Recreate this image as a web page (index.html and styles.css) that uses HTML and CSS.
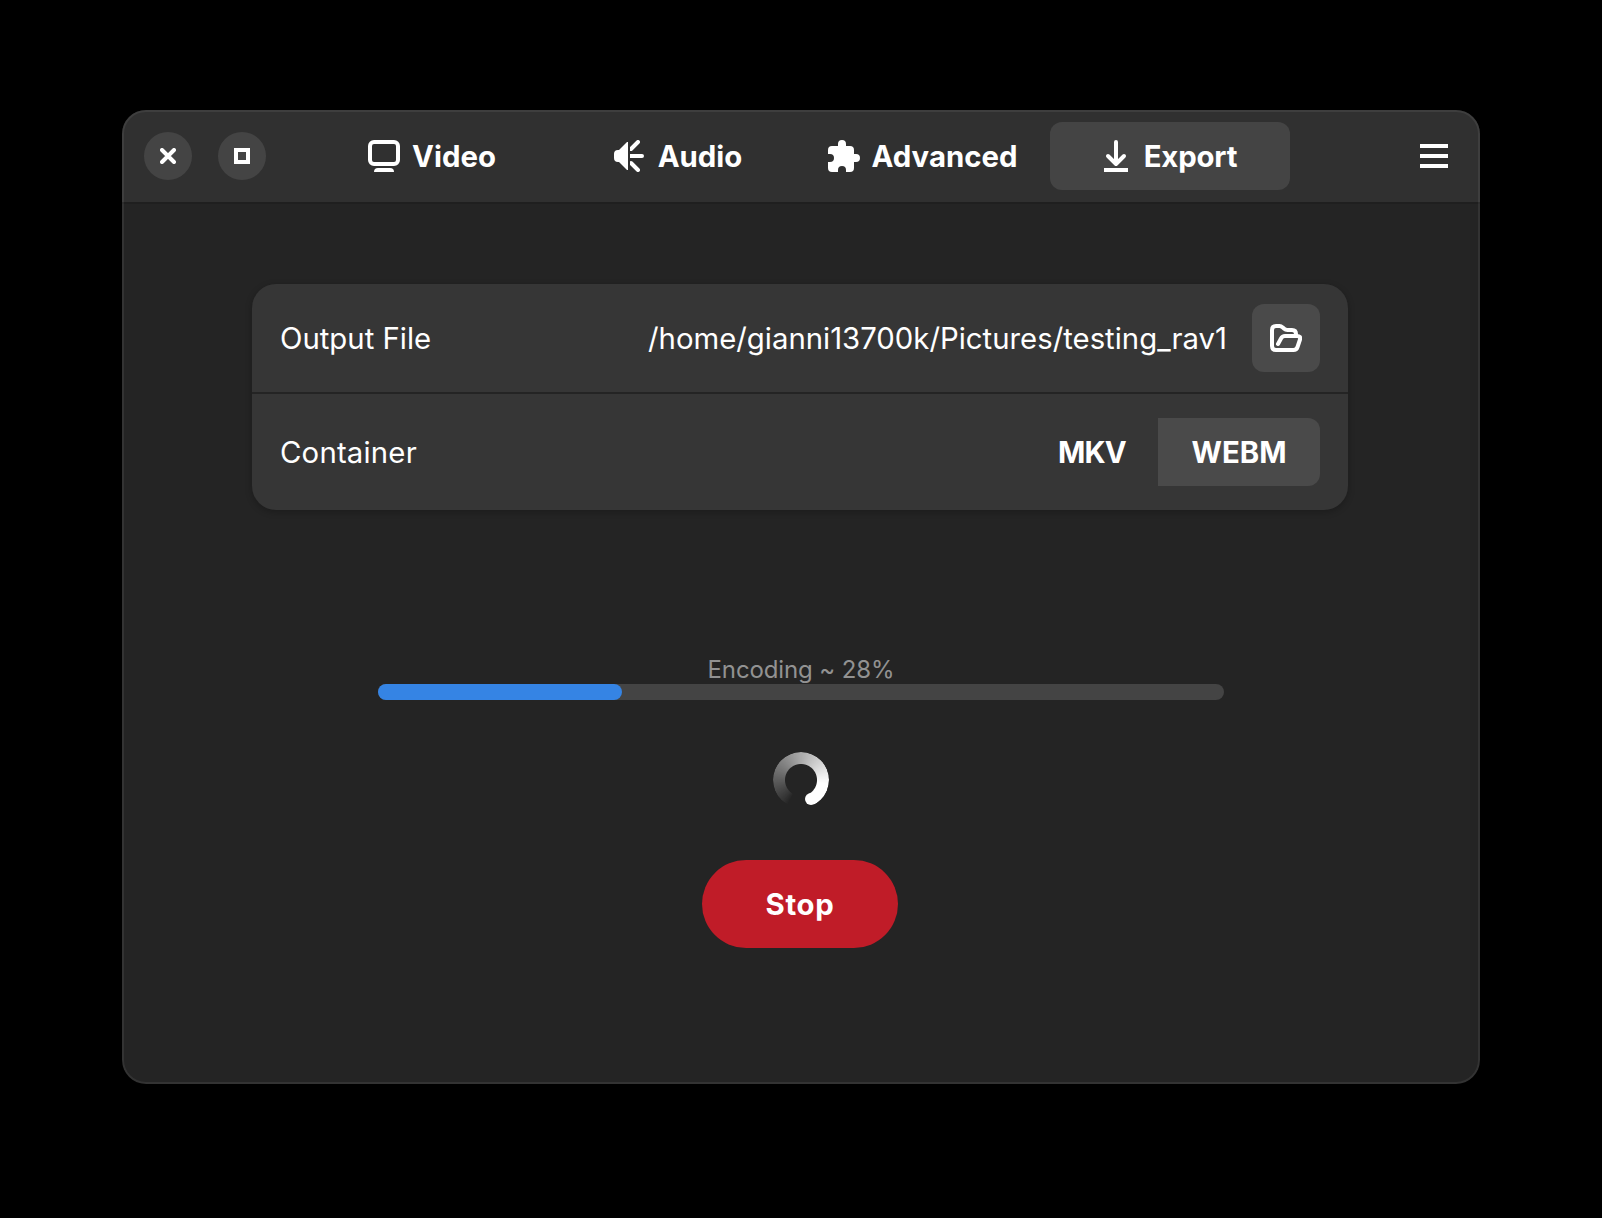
FILE: index.html
```html
<!DOCTYPE html>
<html lang="en">
<head>
<meta charset="utf-8">
<title>Export</title>
<link rel="stylesheet" href="styles.css">
</head>
<body>
<main class="window">
  <header class="header">
    <div class="controls">
      <button class="round" aria-label="Close"><svg width="16" height="16" viewBox="0 0 16 16"><path d="M2 2l12 12M14 2L2 14" stroke="#fff" stroke-width="4" stroke-linecap="round"/></svg></button>
      <button class="round" aria-label="Maximize"><svg width="16" height="16" viewBox="0 0 16 16"><path d="M2 2h12v12H2z" fill="none" stroke="#fff" stroke-width="4"/></svg></button>
    </div>
    <nav class="tabs">
      <button class="tab"><svg width="32" height="32" viewBox="0 0 32 32"><rect x="2" y="2" width="28" height="22" rx="4" fill="none" stroke="#fff" stroke-width="4"/><path d="M6 32q0-4 4-4h12q4 0 4 4z" fill="#fff"/></svg><span>Video</span></button>
      <button class="tab audio"><svg width="32" height="32" viewBox="0 0 32 32"><path d="M16 2v28h-1L7 22H6q-4 0-4-4v-4q0-4 4-4h1l8-8z" fill="#fff"/><path d="M19 9l7-7M18 16h12M19 23l7 7" fill="none" stroke="#fff" stroke-width="4" stroke-linecap="round"/><path d="M16 0h2v32h-2z" fill="#303030"/></svg><span>Audio</span></button>
      <button class="tab advanced"><svg width="32" height="32" viewBox="0 0 32 32"><path d="M10 6V4a4 4 0 0 1 8 0v2h4q4 0 4 4v4h2a4 4 0 0 1 0 8h-2v6q0 4-4 4h-4v-2a4 4 0 0 0-8 0v2H4q-4 0-4-4v-6h2a4 4 0 0 0 0-8H0v-4q0-4 4-4z" fill="#fff"/></svg><span>Advanced</span></button>
      <button class="tab active"><svg width="32" height="32" viewBox="0 0 32 32"><path d="M16 2v20M8 16l8 8 8-8" fill="none" stroke="#fff" stroke-width="4" stroke-linecap="round" stroke-linejoin="round"/><path d="M4 28h24v4H4z" fill="#fff"/></svg><span>Export</span></button>
    </nav>
    <button class="menu" aria-label="Menu"><svg width="28" height="24" viewBox="0 0 28 24"><path d="M0 2h28M0 12h28M0 22h28" stroke="#fff" stroke-width="4"/></svg></button>
  </header>
  <section class="content">
    <div class="card">
      <div class="row file">
        <span class="label">Output File</span>
        <span class="path">/home/gianni13700k/Pictures/testing_rav1</span>
        <button class="open" aria-label="Choose file"><svg width="32" height="32" viewBox="0 0 32 32"><path d="M8 22l3-5.500Q12.300 14 15 14H27q4 0 3 3.500L27.500 25Q26.500 28 23.500 28H6q-4 0-4-4V8q0-4 4-4h3.500q1.700 0 3 1.300l1.700 1.500Q15.500 8 17.500 8H22q4 0 4 4v1" fill="none" stroke="#fff" stroke-width="4" stroke-linecap="round" stroke-linejoin="round"/></svg></button>
      </div>
      <div class="row container">
        <span class="label">Container</span>
        <div class="choice"><button class="option mkv"><span>MKV</span></button><button class="option selected"><span>WEBM</span></button></div>
      </div>
    </div>
    <div class="progress">
      <span class="status">Encoding ~ 28%</span>
      <div class="track"><div class="fill"></div></div>
    </div>
    <div class="spinner"><div class="ring"></div></div>
    <button class="stop"><span>Stop</span></button>
  </section>
</main>
</body>
</html>
```
FILE: styles.css
```css
* { box-sizing: border-box; }
body {
  margin: 0;
  height: 1218px;
  padding: 110px 122px;
  background: #000;
  color: #fff;
  font: 400 29.33px/36px Inter, "Noto Sans", sans-serif;
  overflow: hidden;
}
button {
  border: 0;
  padding: 0;
  background: none;
  color: inherit;
  font: inherit;
  font-weight: 700;
  display: flex;
  align-items: center;
  justify-content: center;
}
button span { padding-top: 2px; }
svg { display: block; flex: none; }
.window {
  position: relative;
  width: 1358px;
  height: 974px;
  border-radius: 24px;
  background: #242424;
  overflow: hidden;
}
.window::after {
  content: "";
  position: absolute;
  inset: 0;
  border: 2px solid rgba(255, 255, 255, .07);
  border-radius: 24px;
  pointer-events: none;
}
.header {
  height: 94px;
  display: flex;
  background: #303030;
  border-bottom: 2px solid #1f1f1f;
}
.controls {
  width: 190px;
  padding: 22px 0 0 22px;
  display: flex;
  gap: 26px;
}
.round { width: 48px; height: 48px; border-radius: 50%; background: #444; }
.tabs { display: flex; gap: 6px; padding-top: 12px; }
.tab { width: 240px; height: 68px; gap: 12px; border-radius: 12px; }
.audio { gap: 14px; padding-right: 2px; }
.advanced { padding-right: 3px; }
.tab.active { background: #444; padding-right: 3px; letter-spacing: -.15px; }
.menu { width: 28px; height: 24px; margin: 34px 0 0 130px; }
.content {
  display: flex;
  flex-direction: column;
  align-items: center;
  padding-top: 80px;
}
.card {
  width: 1096px;
  border-radius: 24px;
  background: #363636;
  box-shadow: 0 2px 6px 1px rgba(0, 0, 0, .2);
  margin-right: 2px;
}
.row { display: flex; align-items: center; padding: 0 28px; }
.file { height: 110px; border-bottom: 2px solid #242424; }
.container { height: 116px; }
.label { flex: 1; padding-top: 2px; }
.container .label { letter-spacing: .2px; }
.path { margin-right: 25px; padding-top: 2px; }
.open { width: 68px; height: 68px; border-radius: 12px; background: #4a4a4a; }
.choice { display: flex; }
.option { width: 132px; height: 68px; }
.mkv { letter-spacing: -.8px; }
.option.selected { width: 162px; background: #4a4a4a; border-radius: 0 12px 12px 0; }
.progress { width: 846px; margin-top: 144px; }
.status {
  display: block;
  height: 30px;
  padding-top: 1px;
  font-size: 24px;
  line-height: 30px;
  letter-spacing: -.12px;
  text-align: center;
  color: #929292;
}
.track { height: 16px; border-radius: 8px; background: #444; }
.fill { width: 244px; height: 16px; border-radius: 8px; background: #3584e4; }
.spinner { margin-top: 52px; width: 56px; height: 56px; display: flex; position: relative; }
.ring {
  width: 56px;
  height: 56px;
  border-radius: 50%;
  background: conic-gradient(from 208deg, rgba(255,255,255,0) 0deg, rgba(255,255,255,.08) 15deg, #fff 250deg, #fff 304deg, transparent 304deg);
  -webkit-mask: radial-gradient(circle, transparent 15.500px, #000 16.500px);
  mask: radial-gradient(circle, transparent 15.500px, #000 16.500px);
}
.spinner::after {
  content: "";
  position: absolute;
  left: 32.300px;
  top: 41.400px;
  width: 12px;
  height: 12px;
  border-radius: 50%;
  background: #fff;
}
.stop {
  width: 196px;
  height: 88px;
  margin: 52px 2px 0 0;
  border-radius: 44px;
  background: #c01c28;
  letter-spacing: .7px;
}
```
